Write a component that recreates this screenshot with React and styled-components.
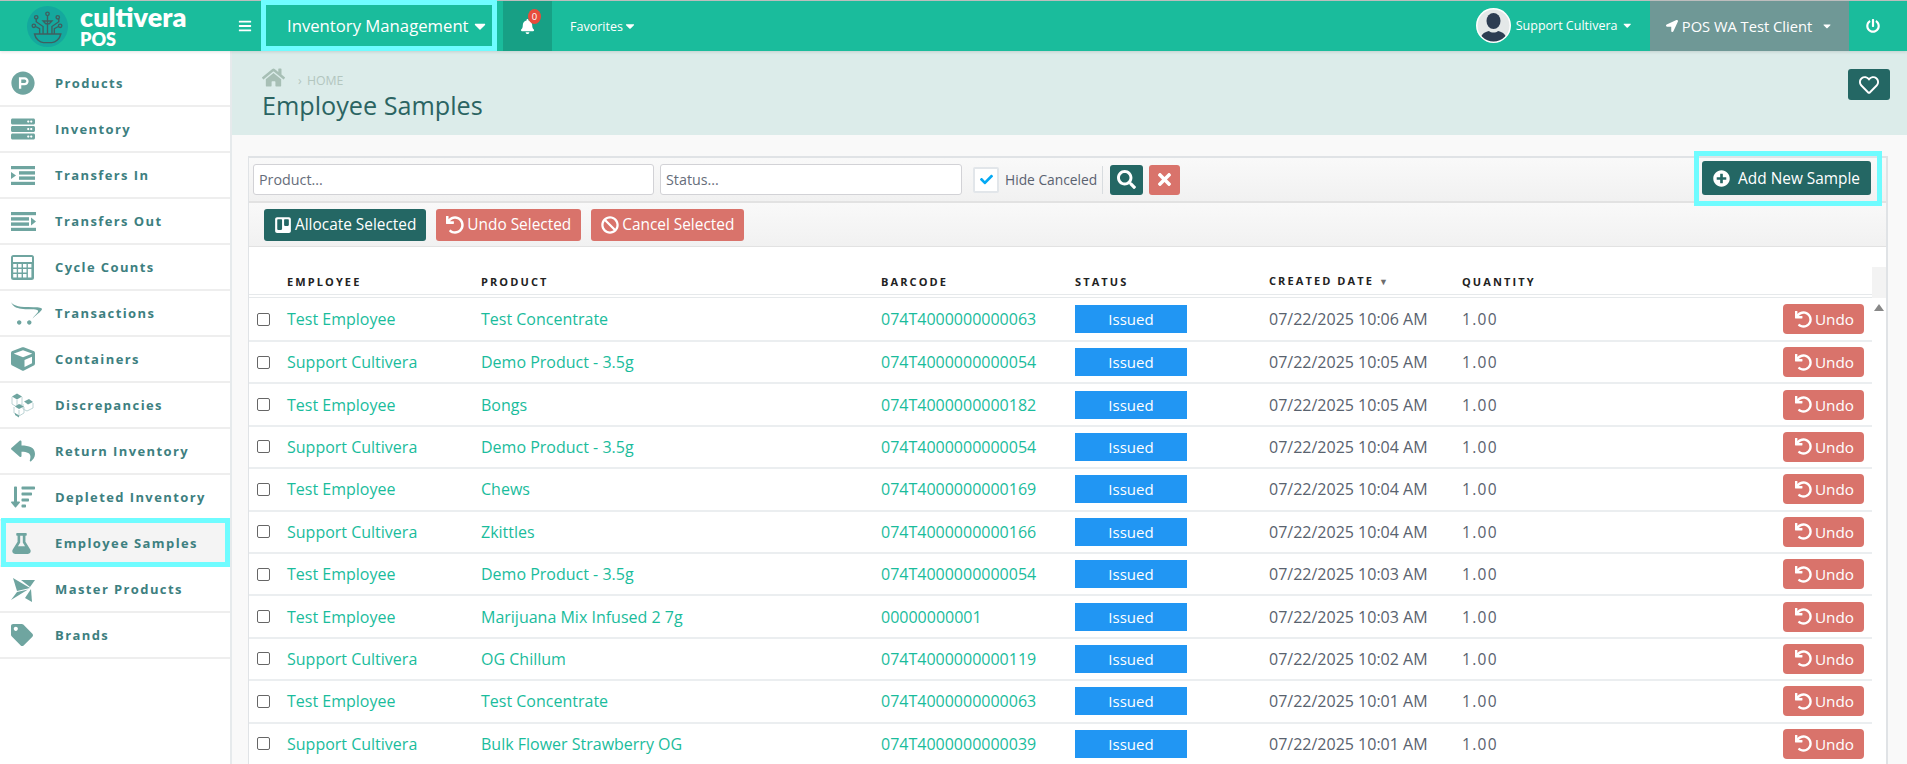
import React from "react";
import styled, { createGlobalStyle } from "styled-components";
import {
  FaBars,
  FaBell,
  FaCaretDown,
  FaCheck,
  FaCube,
  FaFlask,
  FaHome,
  FaLocationArrow,
  FaOpencart,
  FaPlusCircle,
  FaPowerOff,
  FaProductHunt,
  FaRegHeart,
  FaReply,
  FaSearch,
  FaServer,
  FaSortAmountDown,
  FaTag,
  FaTimes,
  FaTrello,
  FaUndo,
  FaBan,
} from "react-icons/fa";

const GREEN = "#1abc9c";
const TEAL = "#246764";
const RED = "#d9736b";
const CYAN = "#6ffcff";
const ICON = "#6fa5a0";

const GlobalStyle = createGlobalStyle`
  * { box-sizing: border-box; }
  html, body { margin: 0; padding: 0; height: 100%; overflow: hidden; }
  body { font-family: "Open Sans", "Liberation Sans", sans-serif; background: #fff; }
`;

const LogoMark = () => (
  <svg width="41" height="41" viewBox="23 15 120 120">
    <circle cx="83" cy="75" r="60" fill="#14a89e" />
    <g fill="none" stroke="#3f5f60" strokeWidth="4">
      <path d="M45 97h77c-3 14-15 25-26 25h-25c-11 0-23-11-26-25z" />
      <path d="M83 43v54M50 53v8l20 14v22M116 53v8l-20 14v22M48 75l12 6v16M115 75l-12 6v16" />
      <circle cx="83" cy="38" r="5" />
      <circle cx="50" cy="48" r="5" />
      <circle cx="113" cy="48" r="5" />
      <circle cx="43" cy="73" r="5" />
      <circle cx="120" cy="73" r="5" />
      <path d="M70 59h26l-8 8h-10z" />
    </g>
  </svg>
);

const Avatar = () => (
  <svg width="35" height="35" viewBox="0 0 35 35">
    <defs>
      <clipPath id="avatarClip">
        <circle cx="17.5" cy="17.5" r="16" />
      </clipPath>
    </defs>
    <circle cx="17.5" cy="17.5" r="17.5" fill="#fff" />
    <circle cx="17.5" cy="17.5" r="16" fill="#e4e8e8" />
    <g clipPath="url(#avatarClip)" fill="#2d3d52">
      <ellipse cx="17.5" cy="13" rx="7" ry="8" />
      <path d="M4 34c0-7 4-10 9-11 2 2 7 2 9 0 5 1 9 4 9 11z" />
    </g>
  </svg>
);

const Pinwheel = () => (
  <svg width="24" height="25" viewBox="0 0 24 25" fill={ICON}>
    <polygon points="2,1 19,11 6,14" />
    <polygon points="10,3 24,3 19,10" />
    <polygon points="0,23 6,15 17,12.5" />
    <polygon points="14,21 20,12 21,25" />
  </svg>
);

const TransferIn = () => (
  <svg width="24" height="19" viewBox="0 0 24 19" fill={ICON}>
    <rect width="24" height="3.2" />
    <rect x="8" y="5.2" width="16" height="3.4" />
    <rect x="8" y="10.4" width="16" height="3.4" />
    <rect y="15.8" width="24" height="3.2" />
    <polygon points="0,6 5,9.500 0,13" />
  </svg>
);

const TransferOut = () => (
  <svg width="25" height="19" viewBox="0 0 25 19" fill={ICON}>
    <rect width="25" height="3.2" />
    <rect y="5.2" width="18" height="3.4" />
    <rect y="10.4" width="18" height="3.4" />
    <rect y="15.8" width="25" height="3.2" />
    <polygon points="20,5.500 25,9.500 20,13.500" />
  </svg>
);

const Calculator = () => (
  <svg width="23" height="25" viewBox="0 0 23 25">
    <rect width="23" height="25" rx="2.500" fill={ICON} />
    <rect x="2" y="2" width="19" height="5" fill="#fff" />
    {[0, 1, 2, 3].map((col) =>
      [0, 1, 2].map((line) =>
        col === 3 && line > 0 ? null : (
          <rect key={col + "-" + line} x={2.2 + col * 4.9} y={9 + line * 5} width="3.500" height="3.500" fill="#fff" />
        )
      )
    )}
    <rect x="16.900" y="14" width="3.500" height="8.500" fill="#fff" />
  </svg>
);

const Discrepancy = () => (
  <svg width="23" height="25" viewBox="0 0 23 25" fill="none" stroke="#b5cfd0" strokeWidth="0.900">
    <path d="M1 4v7l5 3 5-3V4M6 7v7M3 14v6l5 3 5-3v-6M8 17v6M12 11v5l4 2 6-3v-5" />
    <g fill={ICON} stroke="none">
      <polygon points="1,3.500 6,0.500 11,3.500 6,6.500" />
      <polygon points="4,13.500 8,11 13,13.500 8,16" />
      <polygon points="13,8.500 18,6 22,9 17,11.500" />
      <polygon points="4,20 8,22.500 8,24.500 4,22" />
    </g>
  </svg>
);

const navItems = [
  { label: "Products", icon: <FaProductHunt /> },
  { label: "Inventory", icon: <FaServer /> },
  { label: "Transfers In", icon: <TransferIn /> },
  { label: "Transfers Out", icon: <TransferOut /> },
  { label: "Cycle Counts", icon: <Calculator /> },
  { label: "Transactions", icon: <FaOpencart size={31} /> },
  { label: "Containers", icon: <FaCube /> },
  { label: "Discrepancies", icon: <Discrepancy /> },
  { label: "Return Inventory", icon: <FaReply /> },
  { label: "Depleted Inventory", icon: <FaSortAmountDown /> },
  { label: "Employee Samples", icon: <FaFlask size={21} />, active: true },
  { label: "Master Products", icon: <Pinwheel /> },
  { label: "Brands", icon: <FaTag size={22} /> },
];

const samples = [
  ["Test Employee", "Test Concentrate", "074T4000000000063", "07/22/2025 10:06 AM"],
  ["Support Cultivera", "Demo Product - 3.5g", "074T4000000000054", "07/22/2025 10:05 AM"],
  ["Test Employee", "Bongs", "074T4000000000182", "07/22/2025 10:05 AM"],
  ["Support Cultivera", "Demo Product - 3.5g", "074T4000000000054", "07/22/2025 10:04 AM"],
  ["Test Employee", "Chews", "074T4000000000169", "07/22/2025 10:04 AM"],
  ["Support Cultivera", "Zkittles", "074T4000000000166", "07/22/2025 10:04 AM"],
  ["Test Employee", "Demo Product - 3.5g", "074T4000000000054", "07/22/2025 10:03 AM"],
  ["Test Employee", "Marijuana Mix Infused 2 7g", "00000000001", "07/22/2025 10:03 AM"],
  ["Support Cultivera", "OG Chillum", "074T4000000000119", "07/22/2025 10:02 AM"],
  ["Test Employee", "Test Concentrate", "074T4000000000063", "07/22/2025 10:01 AM"],
  ["Support Cultivera", "Bulk Flower Strawberry OG", "074T4000000000039", "07/22/2025 10:01 AM"],
];

const App = () => {
  return (
    <Page>
      <GlobalStyle />
      <TopBar>
        <Logo>
          <LogoMark />
          <LogoText>
            <LogoName>cultivera</LogoName>
            <LogoSub>POS</LogoSub>
          </LogoText>
        </Logo>
        <MenuToggle>
          <FaBars />
        </MenuToggle>
        <ModuleSelect>
          Inventory Management
          <FaCaretDown />
        </ModuleSelect>
        <BellBox>
          <FaBell />
          <BellBadge>0</BellBadge>
        </BellBox>
        <Favorites>
          Favorites
          <FaCaretDown />
        </Favorites>
        <UserMenu>
          <Avatar />
          <span>Support Cultivera</span>
          <FaCaretDown />
        </UserMenu>
        <ClientMenu>
          <FaLocationArrow />
          <span>POS WA Test Client</span>
          <FaCaretDown />
        </ClientMenu>
        <PowerBox>
          <FaPowerOff />
        </PowerBox>
      </TopBar>
      <Body>
        <Sidebar>
          {navItems.map((item) => (
            <NavItem key={item.label} $active={item.active}>
              <NavIcon>{item.icon}</NavIcon>
              <NavLabel>{item.label}</NavLabel>
            </NavItem>
          ))}
        </Sidebar>
        <Main>
          <PageHead>
            <div>
              <Crumbs>
                <FaHome />
                <CrumbText>› HOME</CrumbText>
              </Crumbs>
              <PageTitle>Employee Samples</PageTitle>
            </div>
            <HeartButton>
              <FaRegHeart />
            </HeartButton>
          </PageHead>
          <Content>
            <Panel>
              <FilterBar>
                <TextInput $width="401px" placeholder="Product..." />
                <TextInput $width="302px" placeholder="Status..." />
                <HideBox>
                  <FaCheck />
                </HideBox>
                <HideLabel>Hide Canceled</HideLabel>
                <SquareButton $color={TEAL} $width="33px">
                  <FaSearch />
                </SquareButton>
                <SquareButton $color={RED} $width="31px">
                  <FaTimes />
                </SquareButton>
                <AddHighlight>
                  <ActionButton $color={TEAL} $wide>
                    <FaPlusCircle />
                    Add New Sample
                  </ActionButton>
                </AddHighlight>
              </FilterBar>
              <ActionBar>
                <ActionButton $color={TEAL}>
                  <FaTrello />
                  Allocate Selected
                </ActionButton>
                <ActionButton $color={RED}>
                  <FaUndo />
                  Undo Selected
                </ActionButton>
                <ActionButton $color={RED}>
                  <FaBan />
                  Cancel Selected
                </ActionButton>
              </ActionBar>
              <TableWrap>
                <Table>
                  <HeadRow>
                    <span />
                    <HeadCell>Employee</HeadCell>
                    <HeadCell>Product</HeadCell>
                    <HeadCell>Barcode</HeadCell>
                    <HeadCell>Status</HeadCell>
                    <HeadCell>
                      Created Date <SortMark>▼</SortMark>
                    </HeadCell>
                    <HeadCell>Quantity</HeadCell>
                    <span />
                  </HeadRow>
                  {samples.map((row, index) => (
                    <Row key={index}>
                      <RowCheck type="checkbox" />
                      <LinkCell>{row[0]}</LinkCell>
                      <LinkCell>{row[1]}</LinkCell>
                      <LinkCell>{row[2]}</LinkCell>
                      <div>
                        <StatusBadge>Issued</StatusBadge>
                      </div>
                      <DateCell>{row[3]}</DateCell>
                      <QtyCell>1.00</QtyCell>
                      <UndoButton>
                        <FaUndo />
                        Undo
                      </UndoButton>
                    </Row>
                  ))}
                </Table>
                <ScrollColumn>
                  <ScrollHead />
                  <ScrollArrow />
                </ScrollColumn>
              </TableWrap>
            </Panel>
          </Content>
        </Main>
      </Body>
    </Page>
  );
};

const Page = styled.div`
  height: 100vh;
  display: flex;
  flex-direction: column;
  overflow: hidden;
`;

const TopBar = styled.header`
  flex: none;
  height: 51px;
  display: flex;
  align-items: stretch;
  background: ${GREEN};
  border-top: 1px solid #bdbdbd;
  color: #fff;
  position: relative;
  z-index: 2;
  box-shadow: 0 1px 3px rgba(0, 0, 0, 0.12);
`;

const Logo = styled.div`
  width: 232px;
  display: flex;
  align-items: center;
  padding-left: 27px;
  gap: 12px;
  flex: none;
`;

const LogoText = styled.div`
  display: flex;
  flex-direction: column;
  font-family: "Lato", sans-serif;
  font-weight: 800;
`;

const LogoName = styled.span`
  font-size: 27px;
  line-height: 22px;
`;

const LogoSub = styled.span`
  margin-top: 4px;
  font-size: 18px;
  line-height: 14px;
`;

const MenuToggle = styled.div`
  width: 29px;
  flex: none;
  display: flex;
  align-items: center;
  padding-left: 6px;
  font-size: 14px;
`;

const ModuleSelect = styled.div`
  width: 236px;
  flex: none;
  margin-top: -1px;
  padding-left: 21px;
  border: 5px solid ${CYAN};
  display: flex;
  align-items: center;
  gap: 2px;
  font-size: 16.7px;
  white-space: nowrap;
  svg {
    font-size: 18px;
  }
`;

const BellBox = styled.div`
  width: 49px;
  flex: none;
  margin-left: 6px;
  background: #17a085;
  display: flex;
  align-items: center;
  justify-content: center;
  font-size: 15px;
  position: relative;
`;

const BellBadge = styled.span`
  position: absolute;
  top: 8px;
  left: 25px;
  width: 13px;
  height: 15px;
  border-radius: 50%;
  background: #e74c3c;
  font-size: 9.5px;
  line-height: 15px;
  text-align: center;
`;

const Favorites = styled.div`
  margin-left: 18px;
  display: flex;
  align-items: center;
  font-size: 12.5px;
  svg {
    font-size: 14px;
  }
`;

const UserMenu = styled.div`
  margin-left: auto;
  display: flex;
  align-items: center;
  gap: 5px;
  font-size: 12.5px;
  padding-right: 17px;
  padding-bottom: 1px;
  svg:last-child {
    margin-left: -2px;
  }
`;

const ClientMenu = styled.div`
  width: 199px;
  flex: none;
  background: #6f9896;
  display: flex;
  align-items: center;
  justify-content: center;
  gap: 4px;
  font-size: 14.7px;
  svg:first-child {
    font-size: 12px;
  }
  svg:last-child {
    margin-left: 5px;
    font-size: 12px;
  }
`;

const PowerBox = styled.div`
  width: 58px;
  flex: none;
  display: flex;
  align-items: center;
  justify-content: center;
  padding-right: 10px;
  font-size: 14px;
`;

const Body = styled.div`
  flex: 1;
  display: flex;
  min-height: 0;
`;

const Sidebar = styled.nav`
  width: 232px;
  flex: none;
  padding-top: 10px;
  background: #fff;
  border-right: 2px solid #e6eaec;
`;

const NavItem = styled.div`
  height: 46px;
  display: flex;
  align-items: center;
  padding-left: 11px;
  border-bottom: 2px solid #eeeeee;
  position: relative;
  background: ${(p) => (p.$active ? "#f4f4f4" : "transparent")};
  &::after {
    content: "";
    display: ${(p) => (p.$active ? "block" : "none")};
    position: absolute;
    inset: -3px 0 -2px 1px;
    border: 5px solid ${CYAN};
  }
`;

const NavIcon = styled.span`
  width: 44px;
  flex: none;
  display: flex;
  align-items: center;
  font-size: 24px;
  color: ${ICON};
`;

const NavLabel = styled.span`
  font-size: 13px;
  font-weight: 700;
  letter-spacing: 1.4px;
  color: #3d8080;
`;

const Main = styled.main`
  flex: 1;
  min-width: 0;
  background: #f9f9f9;
  display: flex;
  flex-direction: column;
`;

const PageHead = styled.div`
  flex: none;
  height: 84px;
  background: #dcecea;
  display: flex;
  justify-content: space-between;
  padding: 16px 17px 0 30px;
`;

const Crumbs = styled.div`
  display: flex;
  align-items: center;
  height: 20px;
  color: #a7bfb5;
  font-size: 23px;
`;

const CrumbText = styled.span`
  margin: 7px 0 0 13px;
  font-size: 12.3px;
  word-spacing: 2px;
  color: #b3c6bf;
`;

const PageTitle = styled.div`
  margin-top: 2px;
  font-size: 25.2px;
  line-height: 32px;
  color: #2b6462;
`;

const HeartButton = styled.div`
  width: 42px;
  height: 31px;
  margin-top: 2px;
  background: ${TEAL};
  border-radius: 3px;
  color: #fff;
  font-size: 20px;
  display: flex;
  align-items: center;
  justify-content: center;
`;

const Content = styled.div`
  flex: 1;
  min-height: 0;
  padding: 21px 19px 0 16px;
`;

const Panel = styled.div`
  background: #fff;
  border: 1px solid #e0e3e6;
  border-top-width: 2px;
  border-bottom: 0;
  border-right-width: 2px;
`;

const FilterBar = styled.div`
  height: 45px;
  display: flex;
  align-items: center;
  padding: 0 0 0 4px;
  background: linear-gradient(#f9f9f9, #f1f1f1);
  border-bottom: 2px solid #e2e2e2;
  position: relative;
`;

const TextInput = styled.input`
  width: ${(p) => p.$width};
  height: 31px;
  margin-right: 6px;
  padding: 0 5px;
  border: 1px solid #d2d2d6;
  border-radius: 3px;
  background: #fff;
  font-family: inherit;
  font-size: 14.3px;
  outline: none;
  &::placeholder {
    color: #666d7a;
    opacity: 1;
  }
`;

const HideBox = styled.span`
  width: 26px;
  height: 26px;
  margin-left: 5px;
  background: #fff;
  border: 2px solid #e2e6ea;
  border-radius: 2px;
  color: #03a9f4;
  font-size: 13px;
  display: flex;
  align-items: center;
  justify-content: center;
`;

const HideLabel = styled.span`
  margin-left: 6px;
  padding-right: 5px;
  margin-right: 7px;
  border-right: 1px solid #d8dcdf;
  font-size: 13.8px;
  line-height: 28px;
  color: #5a6270;
`;

const SquareButton = styled.span`
  width: ${(p) => p.$width};
  height: 30px;
  margin-right: 6px;
  background: ${(p) => p.$color};
  border-radius: 3px;
  color: #fff;
  font-size: 19px;
  display: flex;
  align-items: center;
  justify-content: center;
`;

const AddHighlight = styled.div`
  margin-left: auto;
  margin-right: 4px;
  margin-top: -2px;
  border: 5px solid ${CYAN};
  padding: 5px 6px 6px 3px;
`;

const ActionButton = styled.span`
  height: ${(p) => (p.$wide ? "34px" : "32px")};
  padding: 0 ${(p) => (p.$wide ? "11px" : "10px")};
  background: ${(p) => p.$color};
  border-radius: 3px;
  color: #fff;
  font-size: 15.4px;
  display: inline-flex;
  align-items: center;
  gap: ${(p) => (p.$wide ? "8px" : "3px")};
  white-space: nowrap;
  svg {
    font-size: ${(p) => (p.$wide ? "17px" : "18px")};
  }
`;

const ActionBar = styled.div`
  height: 44px;
  display: flex;
  align-items: center;
  gap: 10px;
  padding-left: 15px;
  background: linear-gradient(#f9f9f9, #f1f1f1);
  border-bottom: 1px solid #e2e2e2;
`;

const TableWrap = styled.div`
  display: flex;
`;

const Table = styled.div`
  flex: 1;
  min-width: 0;
`;

const columns = "38px 194px 400px 194px 194px 193px 1fr 81px";

const HeadRow = styled.div`
  height: 51px;
  display: grid;
  grid-template-columns: ${columns};
  align-items: end;
  padding: 0 8px 4px 0;
  border-bottom: 4px double #e6e9eb;
`;

const HeadCell = styled.div`
  font-size: 11px;
  font-weight: 700;
  line-height: 16px;
  letter-spacing: 2.1px;
  text-transform: uppercase;
  color: #222;
`;

const SortMark = styled.span`
  font-size: 9px;
  color: #6d6d6d;
  letter-spacing: 0;
`;

const Row = styled.div`
  height: 42.4px;
  display: grid;
  grid-template-columns: ${columns};
  align-items: center;
  padding-right: 8px;
  border-bottom: 2px solid #ebeef0;
  &:nth-child(2) {
    height: 44px;
  }
`;

const RowCheck = styled.input`
  appearance: none;
  width: 13px;
  height: 13px;
  margin: 0 0 0 8px;
  border: 1px solid #666;
  border-radius: 2px;
  background: #fff;
`;

const LinkCell = styled.div`
  font-size: 16px;
  color: ${GREEN};
  white-space: nowrap;
`;

const StatusBadge = styled.div`
  width: 112px;
  height: 28px;
  background: #2196f3;
  color: #fff;
  font-size: 15px;
  line-height: 28px;
  text-align: center;
`;

const DateCell = styled.div`
  font-size: 16px;
  color: #59626e;
  white-space: nowrap;
`;

const QtyCell = styled.div`
  font-size: 15.5px;
  letter-spacing: 1.3px;
  color: #59626e;
`;

const UndoButton = styled.div`
  width: 81px;
  height: 30px;
  background: ${RED};
  border-radius: 4px;
  color: #fff;
  font-size: 15.3px;
  display: flex;
  align-items: center;
  justify-content: center;
  gap: 3px;
  padding-left: 2px;
  svg {
    font-size: 17px;
  }
`;

const ScrollColumn = styled.div`
  width: 14px;
  flex: none;
  padding-top: 20px;
`;

const ScrollHead = styled.div`
  height: 31px;
  background: #f3f3f3;
`;

const ScrollArrow = styled.div`
  width: 0;
  height: 0;
  margin: 6px auto 0;
  border-left: 5px solid transparent;
  border-right: 5px solid transparent;
  border-bottom: 7px solid #888;
`;

export default App;
